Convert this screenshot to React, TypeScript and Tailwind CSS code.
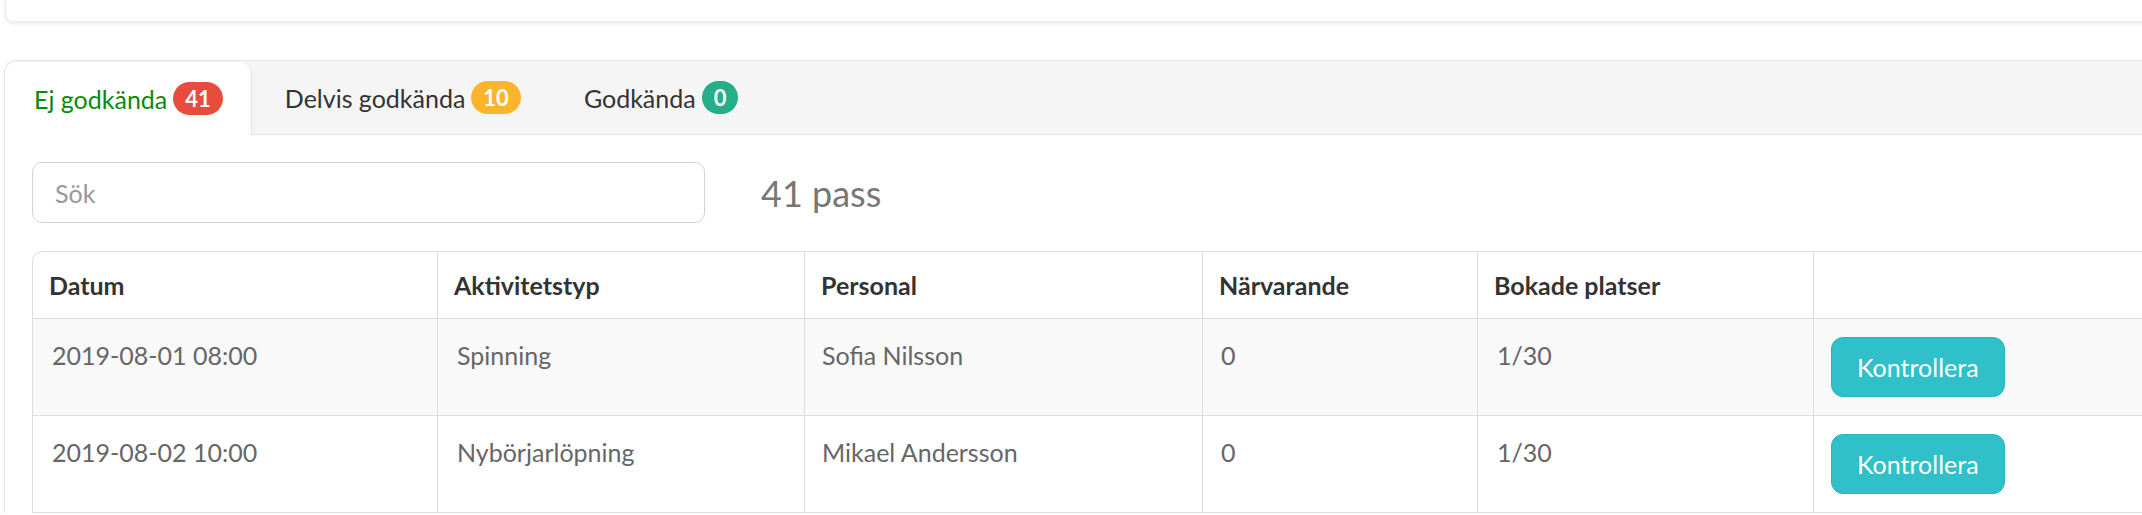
import React from 'react'

type Tab = { label: string; count: number; badge: string; active?: boolean; pad: string }

const TABS: Tab[] = [
  { label: 'Ej godkända', count: 41, badge: 'bg-[#e74c3c]', active: true, pad: 'pl-[29px] pr-[28px]' },
  { label: 'Delvis godkända', count: 10, badge: 'bg-[#fbb52b]', pad: 'pl-[33px] pr-[32px]' },
  { label: 'Godkända', count: 0, badge: 'bg-[#26ae89]', pad: 'pl-[31px] pr-[30px]' },
]

const ROWS = [
  { date: '2019-08-01 08:00', type: 'Spinning', staff: 'Sofia Nilsson', present: '0', booked: '1/30' },
  { date: '2019-08-02 10:00', type: 'Nybörjarlöpning', staff: 'Mikael Andersson', present: '0', booked: '1/30' },
]

const HEADERS = ['Datum', 'Aktivitetstyp', 'Personal', 'Närvarande', 'Bokade platser', '']

export default function App() {
  return (
    <div className="w-screen h-[515px] overflow-hidden bg-white font-['Lato',sans-serif] text-[25px] leading-[36px]">
      {/* kortet ovanför */}
      <div className="ml-[5px] h-[22px] w-[2300px] rounded-bl-[8px] border-b border-l border-[#ececec] bg-white shadow-[0_2px_4px_rgba(0,0,0,0.08)]" />

      <div className="mt-[38px] ml-[4px] w-[2300px] rounded-tl-[12px] border-l border-t border-[#e3e3e3]">
        {/* flikar */}
        <div className="flex h-[74px] items-end rounded-tl-[12px] border-b border-[#e3e3e3] bg-[#f5f5f5]">
          {TABS.map((t) => (
            <div
              key={t.label}
              className={`flex items-center gap-[6px] ${t.pad} ${
                t.active
                  ? '-mb-px h-[73px] rounded-t-[12px] border-r border-[#e3e3e3] bg-white text-[#0a8a0a]'
                  : 'h-[73px] text-[#333333]'
              }`}
            >
              <span>{t.label}</span>
              <span className={`flex h-[33px] items-center rounded-full px-[12px] text-[22px] font-bold text-white ${t.badge}`}>
                {t.count}
              </span>
            </div>
          ))}
        </div>

        <div className="pl-[27px] pt-[27px]">
          {/* sök */}
          <div className="flex items-center">
            <input
              placeholder="Sök"
              className="h-[61px] w-[673px] rounded-[10px] border border-[#ccd5df] px-[22px] text-[#555] placeholder:text-[#999] outline-none"
            />
            <span className="ml-[56px] text-[36px] leading-[40px] text-[#777777]">41 pass</span>
          </div>

          {/* tabell */}
          <div className="mt-[28px] overflow-hidden rounded-tl-[10px] border-l border-t border-[#dddddd]">
            <table className="table-fixed border-separate border-spacing-0">
              <colgroup>
                <col className="w-[405px]" />
                <col className="w-[367px]" />
                <col className="w-[398px]" />
                <col className="w-[275px]" />
                <col className="w-[336px]" />
                <col className="w-[400px]" />
              </colgroup>
              <thead>
                <tr>
                  {HEADERS.map((h, i) => (
                    <th
                      key={i}
                      className="border-b border-r border-[#dddddd] py-[15px] pl-[16px] text-left align-top font-bold text-[#333333]"
                    >
                      {h || '\u00a0'}
                    </th>
                  ))}
                </tr>
              </thead>
              <tbody>
                {ROWS.map((r, i) => (
                  <tr key={i} className={i % 2 === 0 ? 'bg-[#f9f9f9]' : 'bg-white'}>
                    <td className="border-b border-r border-[#dddddd] py-[18px] pl-[19px] align-top text-[#666666]">{r.date}</td>
                    <td className="border-b border-r border-[#dddddd] py-[18px] pl-[19px] align-top text-[#666666]">{r.type}</td>
                    <td className="border-b border-r border-[#dddddd] py-[18px] pl-[17px] align-top text-[#666666]">{r.staff}</td>
                    <td className="border-b border-r border-[#dddddd] py-[18px] pl-[18px] align-top text-[#666666]">{r.present}</td>
                    <td className="border-b border-r border-[#dddddd] py-[18px] pl-[19px] align-top text-[#666666]">{r.booked}</td>
                    <td className="border-b border-r border-[#dddddd] py-[18px] pl-[17px] align-top">
                      <button className="h-[60px] rounded-[12px] border border-[#29b3bd] bg-[#2fc0ca] px-[25px] text-white">
                        Kontrollera
                      </button>
                    </td>
                  </tr>
                ))}
              </tbody>
            </table>
          </div>
        </div>
      </div>
    </div>
  )
}
